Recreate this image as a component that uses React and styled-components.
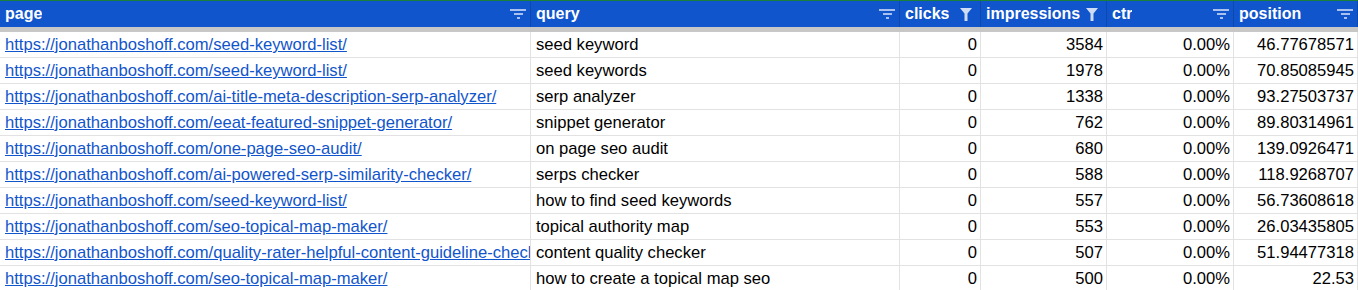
import styled, { createGlobalStyle } from "styled-components";

const GlobalStyle = createGlobalStyle`
  body {
    margin: 0;
    background: #ffffff;
    font-family: Arial, "Liberation Sans", sans-serif;
  }
`;

const COLUMNS = "531px 369px 81px 126px 127px 124px";

const Sheet = styled.div`
  width: 1358px;
  height: 290px;
  overflow: hidden;
  font-family: Arial, "Liberation Sans", sans-serif;
  font-size: 16.6px;
`;

const HeaderRow = styled.div`
  display: grid;
  grid-template-columns: ${COLUMNS};
  height: 26px;
  border-top: 1px solid #188038;
  background: #1155cc;
`;

const HeaderCell = styled.div`
  display: flex;
  align-items: center;
  justify-content: space-between;
  gap: 4px;
  padding: 0 ${(p) => (p.$funnel ? "8px" : "4px")} 0 5px;
  border-right: 1px solid #0d48ad;
  color: #ffffff;
  font-size: 16px;
  font-weight: bold;
  white-space: nowrap;
  overflow: hidden;
`;

const HeaderLabel = styled.span`
  overflow: hidden;
  min-width: 0;
`;

const FreezeBar = styled.div`
  height: 5px;
  background: #c7c7c7;
`;

const Row = styled.div`
  display: grid;
  grid-template-columns: ${COLUMNS};
  height: 26px;
`;

const Cell = styled.div`
  display: flex;
  align-items: center;
  justify-content: ${(p) => (p.$num ? "flex-end" : "flex-start")};
  padding: ${(p) => (p.$num ? "1px 3px 0 0" : "1px 0 0 5px")};
  border-right: 1px solid #e2e2e2;
  border-bottom: 1px solid #e2e2e2;
  color: #000000;
  white-space: nowrap;
  overflow: hidden;
`;

const Link = styled.a`
  color: #1155cc;
  text-decoration: underline;
`;

const SortIcon = () => (
  <svg width="16" height="10" viewBox="0 0 16 10" style={{ flexShrink: 0 }}>
    <rect x="0" y="0" width="16" height="2" fill="#a9c1ee" />
    <rect x="4" y="4" width="9" height="2" fill="#a9c1ee" />
    <rect x="7" y="8" width="3" height="2" fill="#a9c1ee" />
  </svg>
);

const FunnelIcon = () => (
  <svg width="12" height="13" viewBox="0 0 12 13" style={{ flexShrink: 0 }}>
    <path d="M0 0 H12 L7.5 5.5 V13 H4.5 V5.5 Z" fill="#cfdcf5" />
  </svg>
);

const columns = [
  { key: "page", icon: "sort" },
  { key: "query", icon: "sort" },
  { key: "clicks", icon: "funnel" },
  { key: "impressions", icon: "funnel" },
  { key: "ctr", icon: "sort" },
  { key: "position", icon: "sort" },
];

const base = "https://jonathanboshoff.com/";

const rows = [
  ["seed-keyword-list/", "seed keyword", 3584, "46.77678571"],
  ["seed-keyword-list/", "seed keywords", 1978, "70.85085945"],
  ["ai-title-meta-description-serp-analyzer/", "serp analyzer", 1338, "93.27503737"],
  ["eeat-featured-snippet-generator/", "snippet generator", 762, "89.80314961"],
  ["one-page-seo-audit/", "on page seo audit", 680, "139.0926471"],
  ["ai-powered-serp-similarity-checker/", "serps checker", 588, "118.9268707"],
  ["seed-keyword-list/", "how to find seed keywords", 557, "56.73608618"],
  ["seo-topical-map-maker/", "topical authority map", 553, "26.03435805"],
  ["quality-rater-helpful-content-guideline-checker/", "content quality checker", 507, "51.94477318"],
  ["seo-topical-map-maker/", "how to create a topical map seo", 500, "22.53"],
];

export default function App() {
  return (
    <Sheet>
      <GlobalStyle />
      <HeaderRow>
        {columns.map((c) => (
          <HeaderCell key={c.key} $funnel={c.icon === "funnel"}>
            <HeaderLabel>{c.key}</HeaderLabel>
            {c.icon === "sort" ? <SortIcon /> : <FunnelIcon />}
          </HeaderCell>
        ))}
      </HeaderRow>
      <FreezeBar />
      {rows.map(([path, query, impressions, position], i) => (
        <Row key={i}>
          <Cell>
            <Link href="#">{base + path}</Link>
          </Cell>
          <Cell>{query}</Cell>
          <Cell $num>0</Cell>
          <Cell $num>{impressions}</Cell>
          <Cell $num>0.00%</Cell>
          <Cell $num>{position}</Cell>
        </Row>
      ))}
    </Sheet>
  );
}
